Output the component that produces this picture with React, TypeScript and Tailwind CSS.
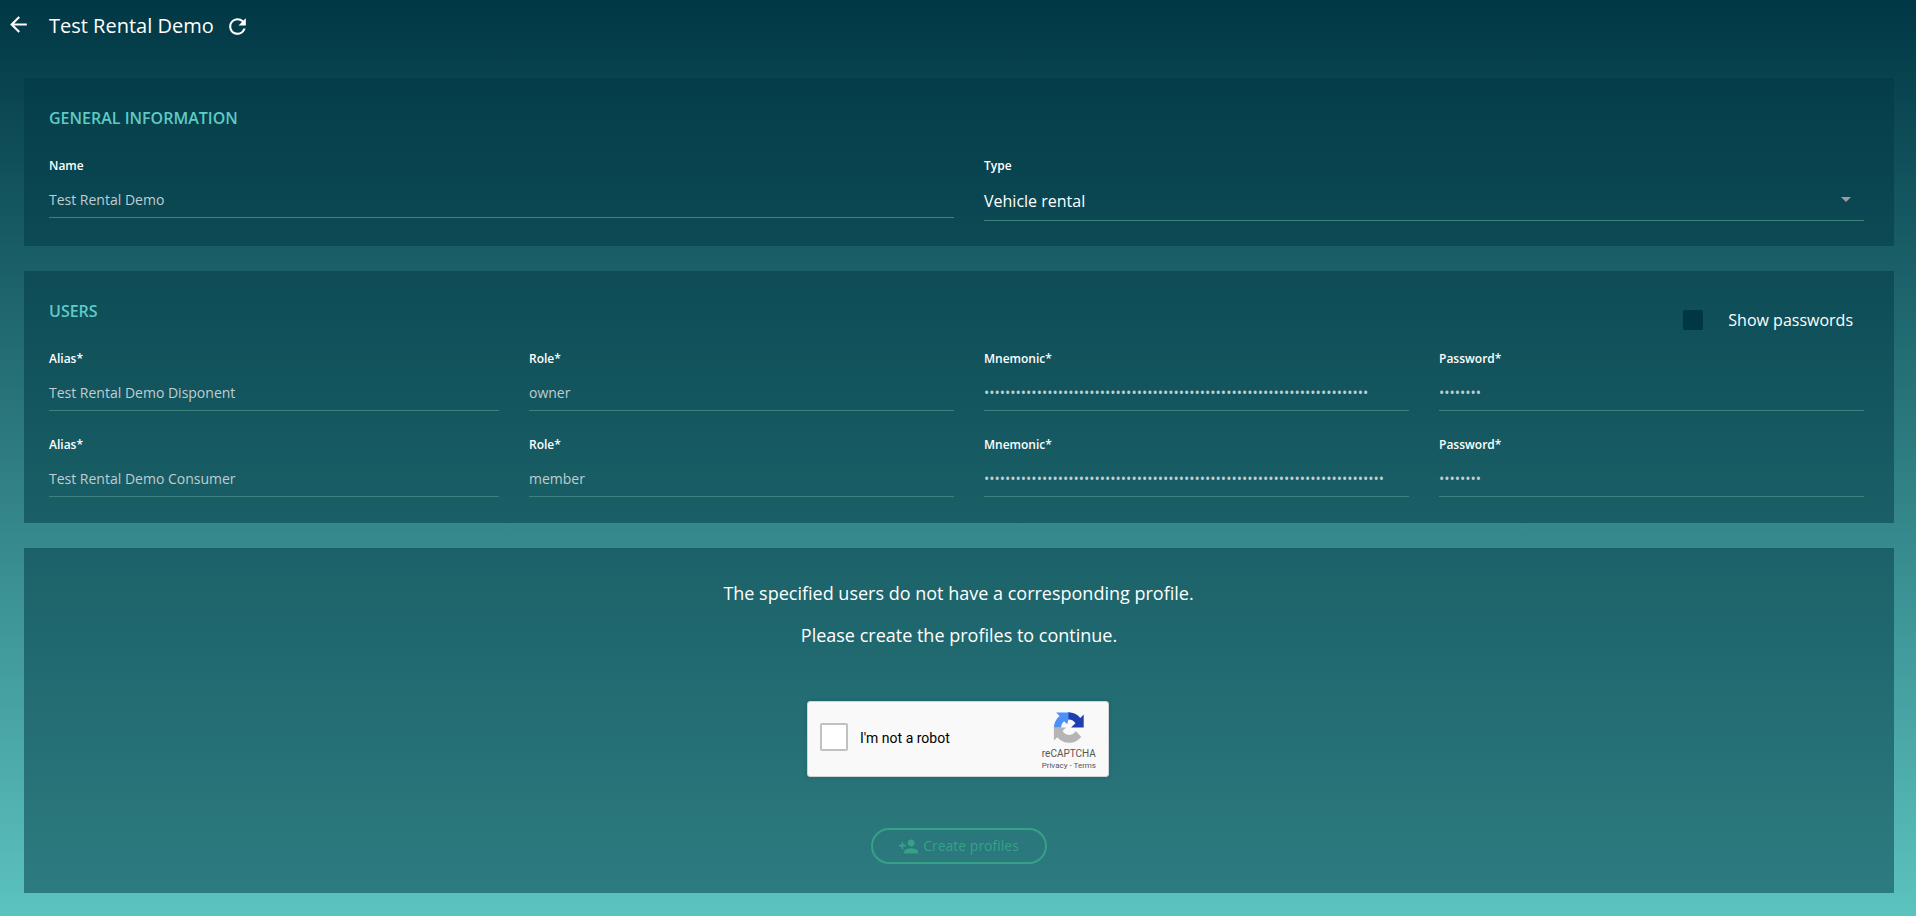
import { MdArrowBack, MdRefresh, MdPersonAdd } from "react-icons/md";

type FieldProps = { label: string; value: string; className?: string };

function Field({ label, value, className = "" }: FieldProps) {
  return (
    <div className={className}>
      <div className="text-[12px] leading-[18px] font-semibold text-white">{label}</div>
      <div className="mt-[14px] h-[29px] border-b border-[#3b837e] text-[14px] leading-[21px] whitespace-nowrap text-[#c0cdd2]">
        {value}
      </div>
    </div>
  );
}

const users = [
  { alias: "Test Rental Demo Disponent", role: "owner", mnemonicLength: 73 },
  { alias: "Test Rental Demo Consumer", role: "member", mnemonicLength: 76 },
];

const mask = (length: number) => "•".repeat(length);

function RecaptchaLogo() {
  return (
    <svg className="h-[32px] w-[32px]" viewBox="0 0 64 64">
      <path
        fill="#1f3fb0"
        d="M61.4 31.1c0-.4 0-.9 0-1.3V5.1l-6.8 6.8C49 5 40.500 .7 31 .7c-.4 0-.8 0-1.200 0v14.700c0 0 1.400-.3 2.200-.2 5.500 0 10.200 2.900 12.800 7.300l-8.700 8.600h25.300z"
      />
      <path
        fill="#4c90f8"
        d="M30.900 1h-24.600l6.800 6.800C6.200 13.400 1.800 21.900 1.800 31.400h14.500c.1-4.600 1.500-8.600 4.200-11.500l1.800-1.400 6 6c.7-2.700 1.300-5.400 2.600-9.200z"
      />
      <path
        fill="#b5b5b5"
        d="M1.800 31.100v25.900l6.800-6.700C14.200 57.200 22.700 61.600 32.200 61.600c9.900 0 18.700-4.800 24.200-12.200l-11.100-11.300c-1.100 2-2.700 3.800-4.500 5.100-1.900 1.500-4.700 2.700-8.500 2.700-6.300-.4-10.600-3.300-13.100-7.800l7.200-7z"
      />
    </svg>
  );
}

function Recaptcha() {
  return (
    <div className="flex h-[76px] w-[302px] rounded-[3px] border border-[#d3d3d3] bg-[#f9f9f9] font-['Roboto',sans-serif] shadow-[0_0_4px_1px_rgba(0,0,0,0.08)]">
      <div className="mt-[21px] ml-[12px] h-[28px] w-[28px] rounded-[2px] border-2 border-[#c1c1c1] bg-white" />
      <div className="mt-[28px] ml-[12px] text-[14px] leading-[17px] text-black">I'm not a robot</div>
      <div className="mt-[10px] mr-[12px] ml-auto flex flex-col items-center">
        <RecaptchaLogo />
        <div className="mt-[4px] text-[10px] leading-[12px] text-[#555]">reCAPTCHA</div>
        <div className="mt-px text-[8px] leading-[10px] text-[#555]">Privacy - Terms</div>
      </div>
    </div>
  );
}

export default function App() {
  return (
    <div className="h-[916px] w-full overflow-hidden bg-linear-to-b/srgb from-[#003744] to-[#5cc3bf] font-['Open_Sans',sans-serif] text-white">
      <header className="flex h-[78px] items-start pl-[6px]">
        <MdArrowBack className="mt-[12px] h-[25px] w-[25px]" />
        <h1 className="mt-[11px] ml-[18px] text-[20px] leading-[30px]">Test Rental Demo</h1>
        <MdRefresh className="mt-[14px] ml-[11px] h-[25px] w-[25px]" />
      </header>

      <main className="mr-[22px] ml-6 flex flex-col gap-[25px]">
        <section className="h-[168px] bg-[#003744]/50 pt-[28px] pr-[30px] pl-[25px]">
          <h2 className="text-[16px] leading-6 font-semibold text-[#5fcac6]">GENERAL INFORMATION</h2>
          <div className="mt-[27px] grid grid-cols-[905px_1fr] gap-x-[30px]">
            <Field label="Name" value="Test Rental Demo" />
            <div>
              <div className="text-[12px] leading-[18px] font-semibold">Type</div>
              <div className="mt-[14px] flex h-[32px] justify-between border-b border-[#3b837e] pr-[13px] text-[16px] leading-6">
                <span>Vehicle rental</span>
                <span className="mt-[8px] h-0 w-0 border-x-[5px] border-t-[5px] border-x-transparent border-t-[#a09a9a]" />
              </div>
            </div>
          </div>
        </section>

        <section className="h-[252px] bg-[#003744]/50 pt-[28px] pr-[30px] pl-[25px]">
          <div className="flex h-[51px] justify-between">
            <h2 className="text-[16px] leading-6 font-semibold text-[#5fcac6]">USERS</h2>
            <label className="mt-[9px] mr-[11px] flex h-6 items-center gap-[25px] text-[16px] leading-6">
              <span className="h-5 w-5 rounded-[2px] bg-[#003744]" />
              Show passwords
            </label>
          </div>
          <div className="flex flex-col gap-[25px]">
            {users.map((user) => (
              <div key={user.alias} className="grid grid-cols-[450px_425px_425px_425px] gap-x-[30px]">
                <Field label="Alias*" value={user.alias} />
                <Field label="Role*" value={user.role} />
                <Field label="Mnemonic*" value={mask(user.mnemonicLength)} />
                <Field label="Password*" value={mask(8)} />
              </div>
            ))}
          </div>
        </section>

        <section className="flex h-[345px] flex-col items-center bg-[#003744]/50 pt-[32px]">
          <p className="mr-px text-[18px] leading-[27px]">The specified users do not have a corresponding profile.</p>
          <p className="mt-[15px] text-[18px] leading-[27px]">Please create the profiles to continue.</p>
          <div className="mt-[52px] mr-[2px]">
            <Recaptcha />
          </div>
          <button
            disabled
            className="mt-[51px] flex h-[36px] w-[176px] items-center justify-center rounded-full border-2 border-[#38a087] pr-px pb-px text-[14px] leading-[21px] text-[#38a087]"
          >
            <MdPersonAdd className="mt-px mr-[4px] h-[21px] w-[21px]" />
            Create profiles
          </button>
        </section>
      </main>
    </div>
  );
}
